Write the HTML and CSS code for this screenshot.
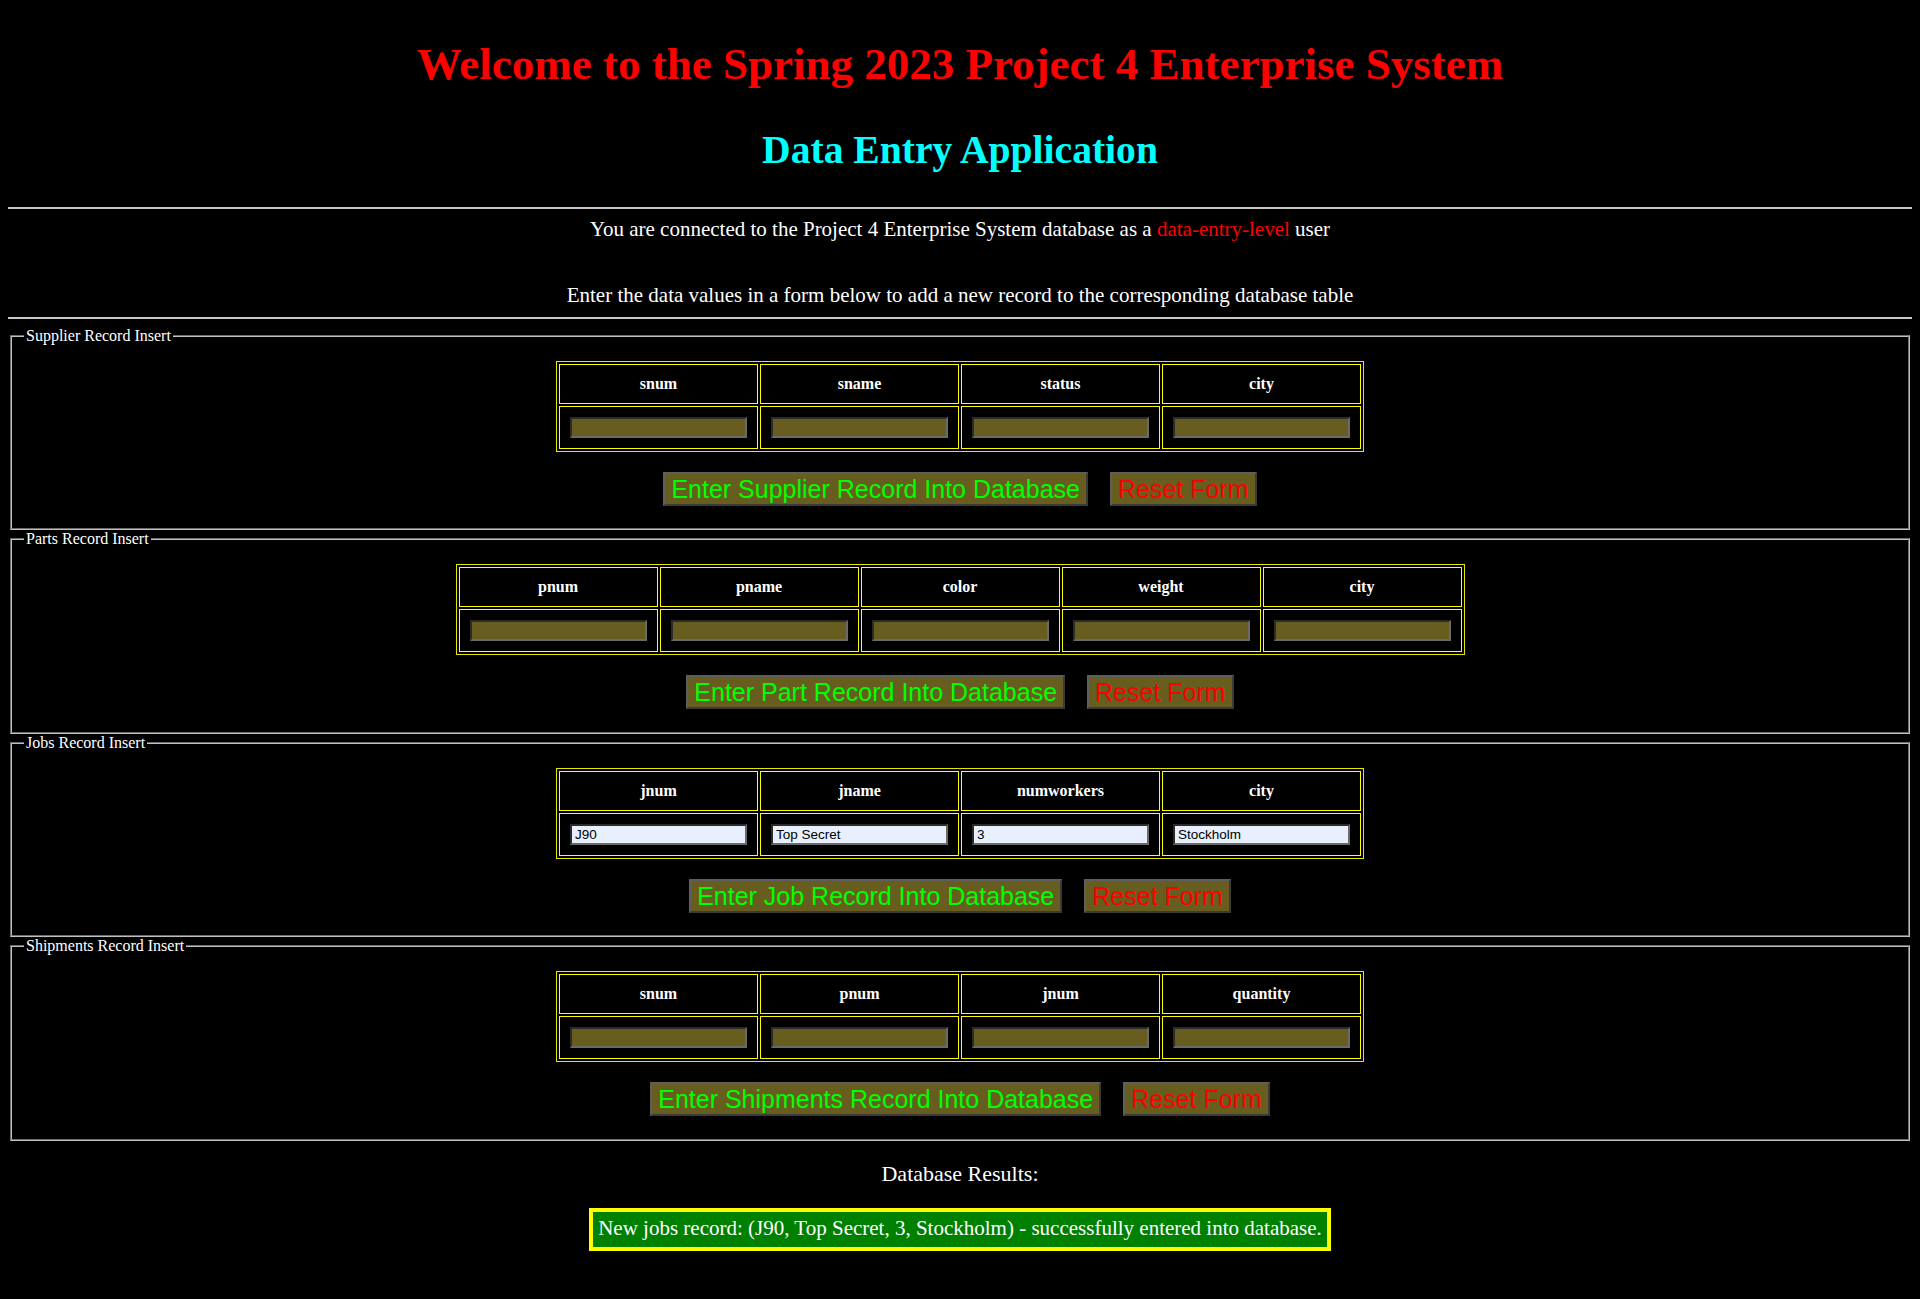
FILE: index.html
```html
<!DOCTYPE html>
<html lang="en">
<head>
<meta charset="utf-8">
<title>Project 4 Enterprise System - Data Entry</title>
<link rel="stylesheet" href="styles.css">
</head>
<body>
<h1 class="title">Welcome to the Spring 2023 Project 4 Enterprise System</h1>
<h2 class="subtitle">Data Entry Application</h2>
<hr class="rule rule-top">
<p class="info">You are connected to the Project 4 Enterprise System database as a <span class="level">data-entry-level</span> user</p>
<p class="info info-second">Enter the data values in a form below to add a new record to the corresponding database table</p>
<hr class="rule rule-bottom">

<form class="entry">
  <fieldset class="group">
    <legend>Supplier Record Insert</legend>
    <table class="fields">
      <tr><th>snum</th><th>sname</th><th>status</th><th>city</th></tr>
      <tr>
        <td><input class="field" type="text"></td>
        <td><input class="field" type="text"></td>
        <td><input class="field" type="text"></td>
        <td><input class="field" type="text"></td>
      </tr>
    </table>
    <div class="actions">
      <button type="button" class="btn btn-submit">Enter Supplier Record Into Database</button>
      <button type="reset" class="btn btn-reset">Reset Form</button>
    </div>
  </fieldset>
</form>

<form class="entry">
  <fieldset class="group">
    <legend>Parts Record Insert</legend>
    <table class="fields">
      <tr><th>pnum</th><th>pname</th><th>color</th><th>weight</th><th>city</th></tr>
      <tr>
        <td><input class="field" type="text"></td>
        <td><input class="field" type="text"></td>
        <td><input class="field" type="text"></td>
        <td><input class="field" type="text"></td>
        <td><input class="field" type="text"></td>
      </tr>
    </table>
    <div class="actions">
      <button type="button" class="btn btn-submit">Enter Part Record Into Database</button>
      <button type="reset" class="btn btn-reset">Reset Form</button>
    </div>
  </fieldset>
</form>

<form class="entry">
  <fieldset class="group">
    <legend>Jobs Record Insert</legend>
    <table class="fields">
      <tr><th>jnum</th><th>jname</th><th>numworkers</th><th>city</th></tr>
      <tr>
        <td><input class="field field-filled" type="text" value="J90"></td>
        <td><input class="field field-filled" type="text" value="Top Secret"></td>
        <td><input class="field field-filled" type="text" value="3"></td>
        <td><input class="field field-filled" type="text" value="Stockholm"></td>
      </tr>
    </table>
    <div class="actions">
      <button type="button" class="btn btn-submit">Enter Job Record Into Database</button>
      <button type="reset" class="btn btn-reset">Reset Form</button>
    </div>
  </fieldset>
</form>

<form class="entry">
  <fieldset class="group">
    <legend>Shipments Record Insert</legend>
    <table class="fields">
      <tr><th>snum</th><th>pnum</th><th>jnum</th><th>quantity</th></tr>
      <tr>
        <td><input class="field" type="text"></td>
        <td><input class="field" type="text"></td>
        <td><input class="field" type="text"></td>
        <td><input class="field" type="text"></td>
      </tr>
    </table>
    <div class="actions">
      <button type="button" class="btn btn-submit">Enter Shipments Record Into Database</button>
      <button type="reset" class="btn btn-reset">Reset Form</button>
    </div>
  </fieldset>
</form>

<p class="results-label">Database Results:</p>
<div class="results">
  <span class="result-box">New jobs record: (J90, Top Secret, 3, Stockholm) - successfully entered into database.</span>
</div>
</body>
</html>
```

FILE: styles.css
```css
html {
  background: #000;
}

body {
  margin: 0;
  padding: 8px;
  background: #000;
  color: #fff;
  font-family: "Liberation Serif", "Times New Roman", serif;
  font-size: 16px;
}

.title {
  margin: 30px 0 0;
  font-size: 45px;
  line-height: 52px;
  font-weight: bold;
  color: #ff0000;
  text-align: center;
}

.subtitle {
  margin: 37px 0 0;
  font-size: 39.6px;
  line-height: 46px;
  font-weight: bold;
  color: #00ffff;
  text-align: center;
}

.rule {
  border: 0;
  height: 2px;
  margin: 0;
  background: #c8c8c8;
}

.rule-top {
  margin-top: 34px;
}

.rule-bottom {
  margin-top: 10px;
  margin-bottom: 8px;
}

.info {
  margin: 8px 0 0;
  font-size: 21px;
  line-height: 24px;
  text-align: center;
}

.info-second {
  margin-top: 42px;
}

.level {
  color: #ff0000;
}

.entry {
  margin: 0;
}

.group {
  margin: 0 2px;
  padding: 16px 12px 22.4px;
  border: 2px groove #c0c0c0;
}

.group legend {
  padding: 0 2px;
  font-size: 16px;
  line-height: 18px;
}

.fields {
  margin: 0 auto;
  border-collapse: separate;
  border-spacing: 2px;
  border: 1px solid #e6e600;
}

.fields th,
.fields td {
  width: 177px;
  padding: 10px;
  border: 1px solid #ffff00;
  text-align: center;
}

.fields th {
  font-size: 16px;
  line-height: 18px;
  font-weight: bold;
}

.field {
  display: block;
  box-sizing: border-box;
  width: 177px;
  height: 21px;
  margin: 0;
  padding: 1px 3px;
  border: 2px solid;
  border-color: #2b2b2b #6a6a6a #6a6a6a #2b2b2b;
  background: #665d1e;
  color: #000;
  font-family: "Liberation Sans", Arial, sans-serif;
  font-size: 13.5px;
}

.field-filled {
  background: #e8f0fe;
}

.actions {
  display: flex;
  justify-content: center;
  gap: 22px;
  margin-top: 20px;
}

.btn {
  margin: 0;
  padding: 1px 6px;
  border: 2px solid;
  border-color: #5e5e5e #3a3a3a #3a3a3a #5e5e5e;
  background: #665d1e;
  font-family: "Liberation Sans", Arial, sans-serif;
  font-size: 25px;
  line-height: 28px;
}

.btn-submit {
  color: #00ff00;
}

.btn-reset {
  color: #ff0000;
}

.results-label {
  margin: 20px 0 0;
  font-size: 22px;
  line-height: 25px;
  text-align: center;
}

.results {
  margin-top: 22px;
  text-align: center;
}

.result-box {
  display: inline-block;
  padding: 4px 5px 6px;
  border: 4px solid #ffff00;
  background: #008000;
  font-size: 21px;
  line-height: 25px;
}
```
